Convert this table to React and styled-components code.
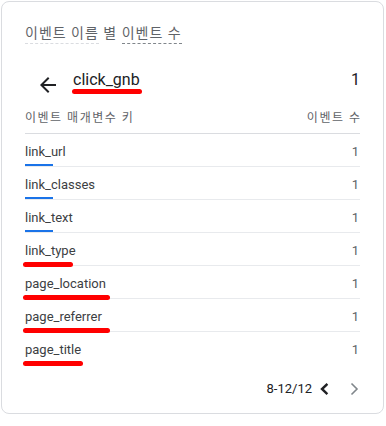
import React from "react";
import styled, { createGlobalStyle } from "styled-components";

const GlobalStyle = createGlobalStyle`
  html, body { margin: 0; padding: 0; background: #ffffff; }
  body { font-family: Roboto, "Noto Sans CJK KR", "Liberation Sans", sans-serif; }
  * { box-sizing: border-box; }
`;

const Card = styled.section`
  margin: 1px;
  width: 383px;
  border: 1px solid #dadce0;
  border-radius: 8px;
  background: #fff;
  padding: 21px 23px 14px 23px;
`;

const Title = styled.div`
  font-size: 14px;
  line-height: 20px;
  letter-spacing: 1px;
  color: #5f6368;
  white-space: nowrap;
`;

const TitlePart = styled.span`
  display: inline-block;
  line-height: 20px;
  border-bottom: 1px dashed ${(p) => p.$line};
`;

const BackRow = styled.div`
  display: flex;
  align-items: center;
  height: 32px;
  margin-top: 20px;
`;

const BackButton = styled.span`
  display: flex;
  width: 24px;
  height: 24px;
  margin: 10px 13px 0 11px;
  color: #202124;
`;

const EventName = styled.span`
  position: relative;
  display: inline-block;
  font-size: 16px;
  line-height: 20px;
  color: #202124;
`;

const Mark = styled.span`
  position: absolute;
  left: ${(p) => p.$left}px;
  bottom: ${(p) => p.$bottom}px;
  width: ${(p) => p.$w}px;
  height: 5px;
  border-radius: 3px;
  background: #ff0000;
`;

const TotalCount = styled.span`
  margin-left: auto;
  font-size: 16px;
  line-height: 20px;
  color: #202124;
`;

const HeaderRow = styled.div`
  display: flex;
  justify-content: space-between;
  padding: 14px 0 7px;
  font-size: 12px;
  line-height: 16px;
  letter-spacing: 1.5px;
  color: #5f6368;
  border-bottom: 1px solid #dadce0;
`;

const HeaderCell = styled.span`
  margin-right: ${(p) => (p.$end ? "-1.5px" : "0")};
`;

const List = styled.div`
  display: flex;
  flex-direction: column;
`;

const Row = styled.div`
  position: relative;
  display: flex;
  align-items: center;
  justify-content: space-between;
  height: 33px;
  padding-top: 3px;
  border-bottom: 1px solid ${(p) => (p.$last ? "transparent" : "#e8eaed")};
`;

const KeyName = styled.span`
  font-size: 13px;
  color: #3c4043;
`;

const Value = styled.span`
  font-size: 13px;
  color: #5f6368;
  padding-right: 1px;
`;

const BlueBar = styled.span`
  position: absolute;
  left: 0;
  bottom: 0;
  width: 28px;
  height: 2px;
  background: #1a73e8;
`;

const Footer = styled.div`
  display: flex;
  align-items: center;
  justify-content: flex-end;
  margin-top: 14px;
  height: 20px;
  padding-right: 1px;
`;

const PageText = styled.span`
  font-size: 13px;
  line-height: 20px;
  color: #202124;
  margin-right: 7px;
`;

const PagerButton = styled.span`
  display: flex;
  width: 10px;
  height: 14px;
  margin-left: ${(p) => p.$gap}px;
`;

const rows = [
  { key: "link_url", blue: true },
  { key: "link_classes", blue: true },
  { key: "link_text", blue: true },
  { key: "link_type", mark: 50 },
  { key: "page_location", mark: 87 },
  { key: "page_referrer", mark: 87 },
  { key: "page_title", mark: 60 },
];

export default function App() {
  return (
    <>
      <GlobalStyle />
      <Card>
        <Title>
          <TitlePart $line="#dadce0">이벤트 이름</TitlePart> 별{" "}
          <TitlePart $line="#80868b">이벤트 수</TitlePart>
        </Title>

        <BackRow>
          <BackButton>
            <svg width="24" height="24" viewBox="0 0 24 24" fill="currentColor">
              <path d="M20 11H7.83l5.59-5.59L12 4l-8 8 8 8 1.41-1.41L7.83 13H20v-2z" />
            </svg>
          </BackButton>
          <EventName>
            click_gnb
            <Mark $left={-1} $bottom={-4} $w={70} />
          </EventName>
          <TotalCount>1</TotalCount>
        </BackRow>

        <HeaderRow>
          <HeaderCell>이벤트 매개변수 키</HeaderCell>
          <HeaderCell $end>이벤트 수</HeaderCell>
        </HeaderRow>

        <List>
          {rows.map((r, i) => (
            <Row key={r.key} $last={i === rows.length - 1}>
              <KeyName>{r.key}</KeyName>
              <Value>1</Value>
              {r.blue && <BlueBar />}
              {r.mark && <Mark $left={-2} $bottom={-2} $w={r.mark} />}
            </Row>
          ))}
        </List>

        <Footer>
          <PageText>8-12/12</PageText>
          <PagerButton $gap={0}>
            <svg width="10" height="14" viewBox="0 0 10 14" fill="none">
              <polyline
                points="7.5,2.8 3,7 7.5,11.2"
                stroke="#202124"
                strokeWidth="2.4"
                strokeLinecap="square"
              />
            </svg>
          </PagerButton>
          <PagerButton $gap={20}>
            <svg width="10" height="14" viewBox="0 0 10 14" fill="none">
              <polyline
                points="2.5,1.5 8,7 2.5,12.5"
                stroke="#80868b"
                strokeWidth="1.6"
              />
            </svg>
          </PagerButton>
        </Footer>
      </Card>
    </>
  );
}
